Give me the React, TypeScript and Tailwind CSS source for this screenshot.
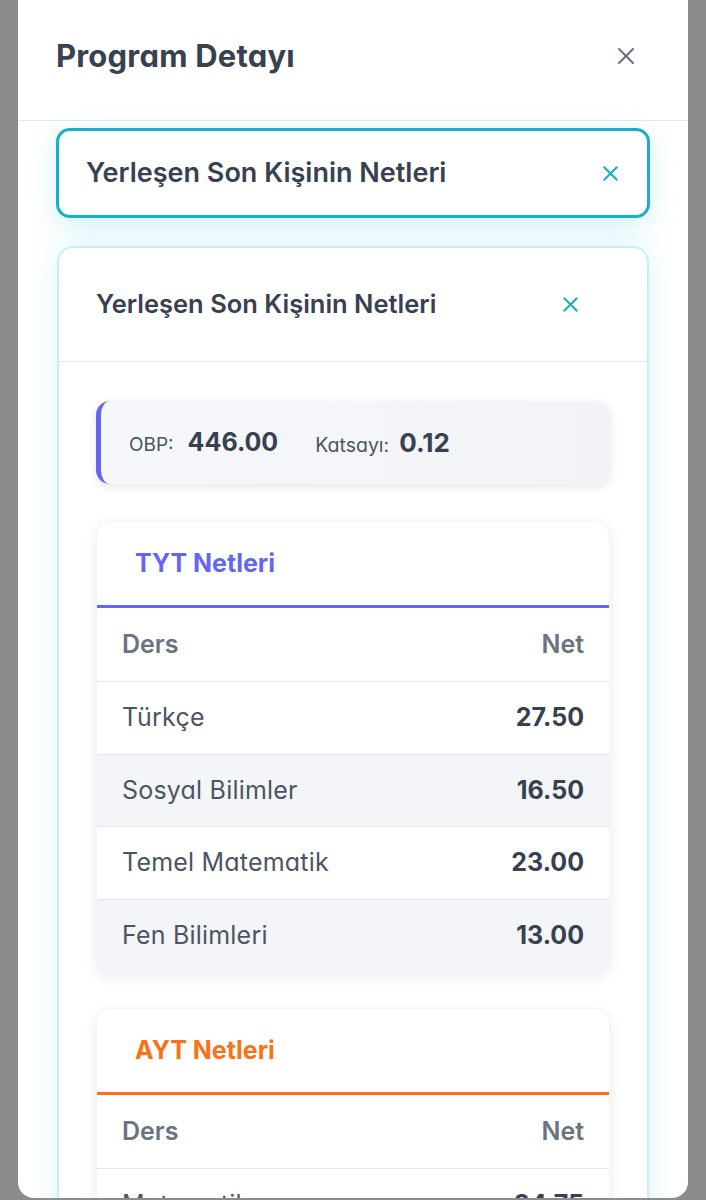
import { X } from "lucide-react";

const tyt = [
  { ders: "Türkçe", net: "27.50" },
  { ders: "Sosyal Bilimler", net: "16.50" },
  { ders: "Temel Matematik", net: "23.00" },
  { ders: "Fen Bilimleri", net: "13.00" },
];

const ayt = [
  { ders: "Matematik", net: "34.75" },
  { ders: "Fizik", net: "10.00" },
];

function NetTable({
  title,
  rows,
  accent,
}: {
  title: string;
  rows: { ders: string; net: string }[];
  accent: "indigo" | "orange";
}) {
  const titleColor = accent === "indigo" ? "text-[#6366f1]" : "text-[#f97316]";
  const lineColor = accent === "indigo" ? "border-[#6366f1]" : "border-[#f97316]";
  return (
    <div className="rounded-[14px] bg-white shadow-[0_4px_14px_rgba(15,23,42,0.08)] border border-gray-100 overflow-hidden">
      <div className={`h-[86px] flex items-center pl-[38px] border-b-[3px] ${lineColor}`}>
        <h4 className={`text-[25px] font-bold ${titleColor}`}>{title}</h4>
      </div>
      <div className="h-[74px] flex items-center justify-between px-[25px] border-b border-gray-200 text-[25px] font-semibold text-[#6b7280]">
        <span>Ders</span>
        <span>Net</span>
      </div>
      {rows.map((r, i) => (
        <div
          key={r.ders}
          className={`h-[72.5px] flex items-center justify-between px-[25px] text-[25px] ${
            i < rows.length - 1 ? "border-b border-gray-200" : ""
          } ${i % 2 === 1 ? "bg-[#f3f5f8]" : "bg-white"}`}
        >
          <span className="text-[#4b5563] tracking-[0.2px]">{r.ders}</span>
          <span className="font-bold text-[#374151]">{r.net}</span>
        </div>
      ))}
    </div>
  );
}

export default function App() {
  return (
    <div
      className="min-h-screen bg-[#8c8c8c] px-[18px] overflow-hidden [font-feature-settings:'cv11']"
      style={{ fontFamily: "Inter, 'Noto Sans', sans-serif" }}
    >
      <div className="h-[1198px] bg-white rounded-b-[16px] overflow-hidden">
        <div className="h-[121px] flex items-center justify-between pl-[38px] pr-[48px] pb-[8px] border-b border-gray-200">
          <h2 className="text-[31px] font-bold text-[#374151] tracking-[0.2px]">Program Detayı</h2>
          <X className="w-[28px] h-[28px] text-[#6b7280]" strokeWidth={1.75} />
        </div>

        <div className="px-[38px] pt-[7px]">
          <div className="h-[90px] flex items-center justify-between pl-[27px] pr-[24px] border-[3px] border-[#17b0c8] rounded-[14px] shadow-[0_8px_28px_rgba(6,182,212,0.18)]">
            <h3 className="text-[27px] font-semibold text-[#374151]">Yerleşen Son Kişinin Netleri</h3>
            <X className="w-[25px] h-[25px] text-[#17b0c8]" strokeWidth={2} />
          </div>

          <div className="mt-[28px] mx-px border-2 border-[#c8eef4] rounded-[16px] shadow-[0_0_28px_rgba(6,182,212,0.14)]">
            <div className="h-[114px] flex items-center justify-between pl-[37px] pr-[64px] border-b border-gray-200">
              <h3 className="text-[25.5px] font-semibold text-[#374151]">Yerleşen Son Kişinin Netleri</h3>
              <X className="w-[25px] h-[25px] text-[#17b0c8]" strokeWidth={2} />
            </div>

            <div className="px-[37px] pt-[39px] pb-10 flex flex-col gap-[37px]">
              <div className="h-[83px] flex items-center gap-[37px] pl-[28px] rounded-[14px] border-l-[5px] border-[#6366f1] bg-gradient-to-r from-[#f7f8fb] to-[#f1f3f7] shadow-[0_3px_10px_rgba(15,23,42,0.10)]">
                <div className="flex items-baseline gap-[14px]">
                  <span className="text-[19px] text-[#4b5563]">OBP:</span>
                  <span className="text-[25px] font-bold text-[#374151]">446.00</span>
                </div>
                <div className="flex items-baseline gap-[10px]">
                  <span className="text-[19.5px] text-[#4b5563]">Katsayı:</span>
                  <span className="text-[26px] font-bold text-[#374151]">0.12</span>
                </div>
              </div>

              <NetTable title="TYT Netleri" rows={tyt} accent="indigo" />
              <div className="-mt-[2px]">
                <NetTable title="AYT Netleri" rows={ayt} accent="orange" />
              </div>
            </div>
          </div>
        </div>
      </div>
    </div>
  );
}
